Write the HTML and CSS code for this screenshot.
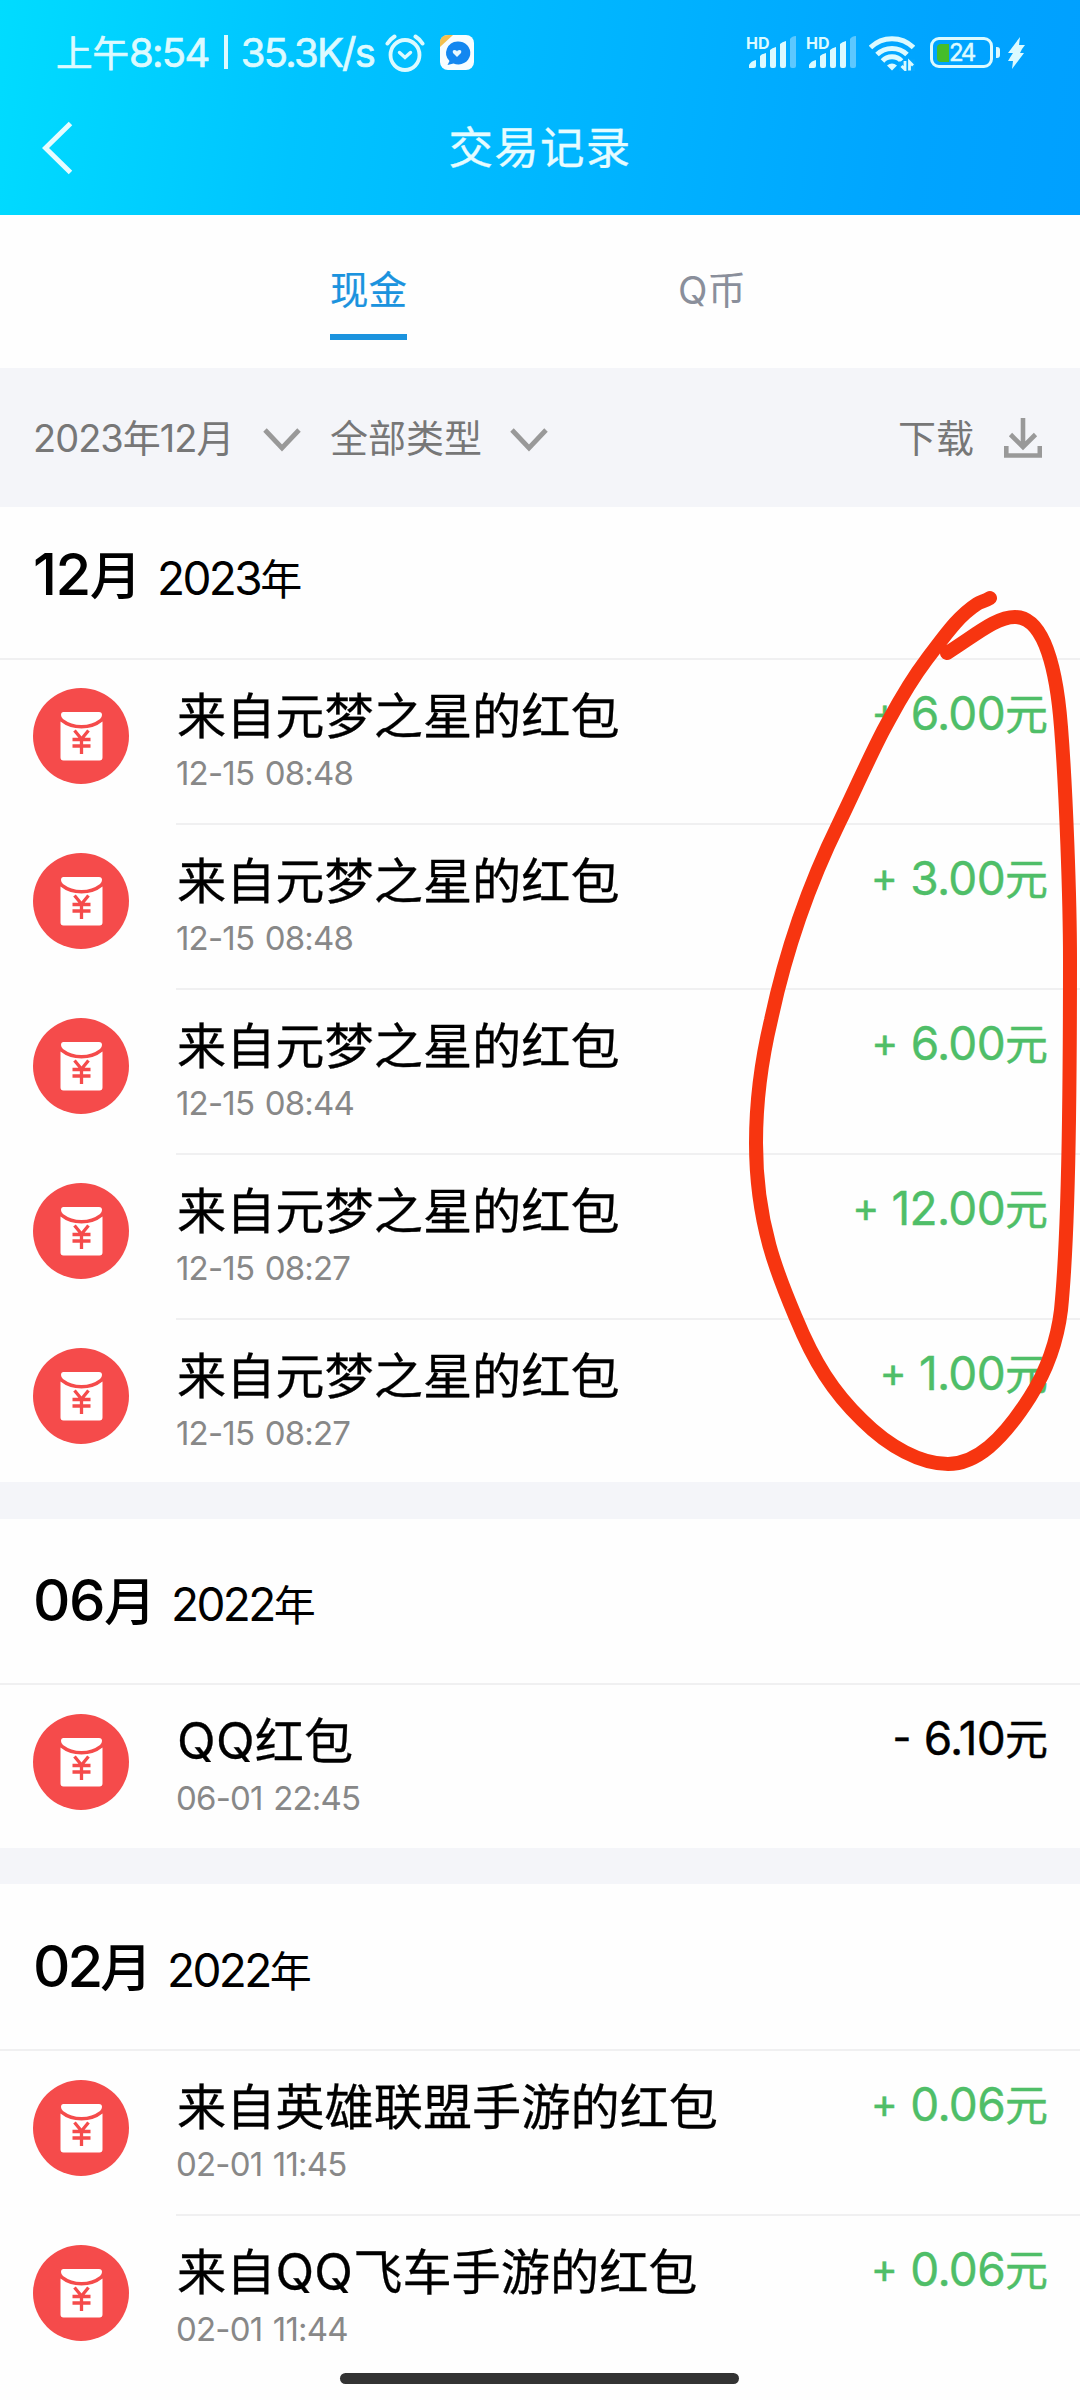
FILE: index.html
```html
<!DOCTYPE html>
<html lang="zh-CN">
<head>
<meta charset="utf-8">
<title>交易记录</title>
<link rel="stylesheet" href="styles.css">
</head>
<body>
<svg class="defs" width="0" height="0">
  <symbol id="packet" viewBox="0 0 96 96">
    <circle cx="48" cy="48" r="48" fill="#f54b4b"/>
    <path d="M30.500 24h35.500q3 0 3 3q0 2-2 4q-8 6-18.500 6t-18.500-6q-2-2-2-4q0-3 2.500-3z" fill="#fff"/>
    <path d="M27.500 33.500q8.500 7 21 7t21-7v36q0 3-3 3h-36q-3 0-3-3z" fill="#fff"/>
    <path d="M41.500 42.500l7 8.500 7-8.500M48.500 51v15M39.500 51.500h18M39.500 58h18" fill="none" stroke="#f54b4b" stroke-width="3.300"/>
  </symbol>
  <symbol id="signal" viewBox="0 0 50 34">
    <path d="M1 33v-3q2-4 7-5v6q0 2-2 2zM12 33v-12q2-2 6-3v13q0 2-2 2h-2q-2 0-2-2zM22 31v-16q2-2 6-3v19q0 2-2 2h-2q-2 0-2-2zM32 31v-22q2-2 6-3v25q0 2-2 2h-2q-2 0-2-2z" fill="#dcfaff"/>
    <path d="M42 31v-27q2-3 6-3v30q0 2-2 2h-2q-2 0-2-2z" fill="#5cc8ff"/>
  </symbol>
  <symbol id="chevron" viewBox="0 0 38 24">
    <path d="M2 2l17 18L36 2" fill="none" stroke="#999" stroke-width="4.800"/>
  </symbol>
</svg>

<div class="screen">
  <header class="top">
    <div class="status">
      <div class="clock"><span class="cjk">上午</span>8:54<i class="bar"></i>35.3K/s</div>
      <svg class="alarm" width="40" height="38" viewBox="0 0 40 38" fill="none" stroke="#dcfaff" stroke-linecap="round">
        <ellipse cx="20" cy="21" rx="14.500" ry="15" stroke-width="3.800"/>
        <path d="M2.500 9.500q3-4.500 7-7M37.500 9.500q-3-4.500-7-7" stroke-width="4"/>
        <path d="M14.500 18.500l5.500 5 5.500-5" stroke-width="3.400"/>
      </svg>
      <svg class="app" width="34" height="35" viewBox="0 0 34 35">
        <rect width="34" height="35" rx="8" fill="#f8fdff"/>
        <path d="M0 12V8q0-8 8-8h5z" fill="#f3bf4d"/>
        <circle cx="17.500" cy="17.500" r="14" fill="#f8fdff"/>
        <path d="M17.500 6.500a12 11.500 0 1 1-4 22l-6 1.500 2-4a12 11.500 0 0 1 8-19.500z" fill="#1387f0"/>
        <path d="M17 22l-4-4q-1-3 1.500-3t2.500 1.500q0-1.500 2.500-1.500t1.500 3z" fill="#e9f8ff"/>
      </svg>
      <div class="net"><span class="hd">HD</span><svg width="50" height="34"><use href="#signal"/></svg></div>
      <div class="net"><span class="hd">HD</span><svg width="50" height="34"><use href="#signal"/></svg></div>
      <svg class="wifi" width="46" height="36" viewBox="0 0 46 36">
        <g fill="none" stroke="#dcfaff" stroke-width="5">
          <path d="M1.500 12.500a30.500 30.500 0 0 1 43 0"/>
          <path d="M8 19.500a21.500 21.500 0 0 1 30 0"/>
          <path d="M13.500 26a13 13 0 0 1 19 0"/>
        </g>
        <path d="M18 30.500q5-4 10 0l-5 5z" fill="#dcfaff"/>
        <path d="M30 26.500h5l5-2h6v12H30z" fill="#06a8ff"/>
        <path d="M36 26v8.500l-3.500-3.500M40.500 35.500v-8.500l3.500 3.500" fill="none" stroke="#dcfaff" stroke-width="2.800"/>
      </svg>
      <div class="battery"><i class="charge"></i><span>24</span></div>
      <i class="tip"></i>
      <svg class="bolt" width="18" height="32" viewBox="0 0 18 32"><path d="M13 0L1 16h5l-2 3-3 5h5L5 32 17 16h-4l2-4 3-4h-6z" fill="#dcfaff"/></svg>
    </div>
    <div class="nav">
      <svg class="back" width="32" height="54" viewBox="0 0 32 54"><path d="M28.500 2.500L3.500 27l25 24.500" fill="none" stroke="#e6fcff" stroke-width="5"/></svg>
      <h1>交易记录</h1>
    </div>
  </header>

  <nav class="tabs">
    <div class="tab active">现金</div>
    <div class="tab"><span>Q币</span></div>
  </nav>

  <div class="filters">
    <span class="month-filter">2023年12月</span>
    <svg class="chev one" width="38" height="24"><use href="#chevron"/></svg>
    <span>全部类型</span>
    <svg class="chev two" width="38" height="24"><use href="#chevron"/></svg>
    <span class="download">下载</span>
    <svg width="38" height="40" viewBox="0 0 38 40" fill="none" stroke="#999" stroke-width="4.600"><path d="M19 0v29M6.500 16.500L19 29l12.500-12.500M2.300 28v9.500h33.500v-9.500"/></svg>
  </div>

  <section class="group first">
    <h2><b>12<span class="cjk">月</span></b><span class="year">2023<span class="cjk">年</span></span></h2>
    <article class="row"><svg class="icon"><use href="#packet"/></svg><div class="body"><div class="info"><p class="name">来自元梦之星的红包</p><p class="date">12-15 08:48</p></div><p class="amount"><span class="sign">+ </span>6.00<span>元</span></p></div></article>
    <article class="row"><svg class="icon"><use href="#packet"/></svg><div class="body"><div class="info"><p class="name">来自元梦之星的红包</p><p class="date">12-15 08:48</p></div><p class="amount"><span class="sign">+ </span>3.00<span>元</span></p></div></article>
    <article class="row"><svg class="icon"><use href="#packet"/></svg><div class="body"><div class="info"><p class="name">来自元梦之星的红包</p><p class="date">12-15 08:44</p></div><p class="amount"><span class="sign">+ </span>6.00<span>元</span></p></div></article>
    <article class="row"><svg class="icon"><use href="#packet"/></svg><div class="body"><div class="info"><p class="name">来自元梦之星的红包</p><p class="date">12-15 08:27</p></div><p class="amount"><span class="sign">+ </span>12.00<span>元</span></p></div></article>
    <article class="row"><svg class="icon"><use href="#packet"/></svg><div class="body"><div class="info"><p class="name">来自元梦之星的红包</p><p class="date">12-15 08:27</p></div><p class="amount"><span class="sign">+ </span>1.00<span>元</span></p></div></article>
  </section>

  <section class="group">
    <h2><b>06<span class="cjk">月</span></b><span class="year">2022<span class="cjk">年</span></span></h2>
    <article class="row"><svg class="icon"><use href="#packet"/></svg><div class="body"><div class="info"><p class="name"><span class="latin">QQ</span>红包</p><p class="date">06-01 22:45</p></div><p class="amount out"><span class="sign">- </span>6.10<span>元</span></p></div></article>
  </section>

  <section class="group last">
    <h2><b>02<span class="cjk">月</span></b><span class="year">2022<span class="cjk">年</span></span></h2>
    <article class="row"><svg class="icon"><use href="#packet"/></svg><div class="body"><div class="info"><p class="name">来自英雄联盟手游的红包</p><p class="date">02-01 11:45</p></div><p class="amount"><span class="sign">+ </span>0.06<span>元</span></p></div></article>
    <article class="row"><svg class="icon"><use href="#packet"/></svg><div class="body"><div class="info"><p class="name">来自<span class="latin">QQ</span>飞车手游的红包</p><p class="date">02-01 11:44</p></div><p class="amount"><span class="sign">+ </span>0.06<span>元</span></p></div></article>
  </section>

  <i class="home"></i>

  <!-- hand-drawn marker loop around the December amounts -->
  <svg class="marker" width="1080" height="2400" viewBox="0 0 1080 2400">
    <path d="M990 598C985 601 980 602 977 604C957 617 944 637 927 659C905 688 893 713 883 731C868 760 855 790 839 823C812 878 788 940 771 1020C761 1062 756 1105 756 1143C756 1225 779 1278 796 1318C814 1362 833 1392 862 1420C889 1447 921 1464 948 1464C976 1464 1002 1441 1030 1397C1047 1370 1057 1343 1061 1310C1065 1270 1068 1190 1069 1120C1070 1050 1070 1000 1070 960C1070 900 1066 790 1061 727C1057 675 1046 617 1015 617C996 617 977 634 947 653"/>
  </svg>
</div>
</body>
</html>
```
FILE: styles.css
```css
* { box-sizing: border-box; margin: 0; padding: 0; }
body {
  width: 1080px;
  background: #fff;
  font-family: Inter, "Noto Sans CJK SC", sans-serif;
}
svg { display: block; flex: none; }
i { display: block; flex: none; }
.defs { position: absolute; }
.screen {
  position: relative;
  width: 1080px;
  height: 2400px;
  overflow: hidden;
  background: #fefefe;
}

/* header */
.top {
  height: 215px;
  background: linear-gradient(98deg, #00dcff 0%, #00c4ff 28%, #00b2ff 60%, #00a4ff 85%, #00a0ff 100%);
  color: #dcfaff;
}
.status {
  display: flex;
  height: 82px;
  padding: 34px 55px 0 56px;
}
.clock {
  display: flex;
  align-items: baseline;
  width: 329px;
  height: 36px;
  line-height: 38px;
  font-size: 40px;
  letter-spacing: -1.7px;
  white-space: nowrap;
  -webkit-text-stroke: .7px #dcfaff;
}
.clock .cjk { font-size: 36.5px; letter-spacing: 0; }
.clock .bar {
  align-self: flex-start;
  width: 4px;
  height: 34px;
  margin: 1px 13px 0 15px;
  background: #dcfaff;
}
.app { margin: 1px 272px 0 15px; }
.net { position: relative; width: 50px; height: 35px; margin-right: 10px; }
.net svg { margin: 1px 0 0 2px; }
.net .hd {
  position: absolute;
  left: 0;
  top: 2px;
  font-size: 16px;
  font-weight: 700;
  line-height: 15px;
}
.wifi { margin: 1px 15px 0 3px; }
.battery {
  display: flex;
  align-items: center;
  width: 63px;
  height: 31px;
  margin-top: 3px;
  padding-left: 4px;
  border: 3px solid #dcfaff;
  border-radius: 9px;
}
.charge { width: 12px; height: 18px; border-radius: 4px 0 0 4px; background: #45bd2b; }
.battery span { font-size: 24px; line-height: 24px; letter-spacing: -2.4px; -webkit-text-stroke: .5px #dcfaff; }
.tip { width: 4px; height: 11px; margin: 13px 7px 0 3px; border-radius: 0 3px 3px 0; background: #dcfaff; }
.bolt { margin-top: 3px; }
.nav {
  display: grid;
  grid-template-columns: 90px 1fr 90px;
  align-items: center;
  height: 132px;
}
.back { margin-left: 42px; }
.nav h1 {
  font-size: 44.5px;
  font-weight: 400;
  letter-spacing: 1.3px;
  line-height: 60px;
  text-align: center;
  color: #e6fcff;
  -webkit-text-stroke: .3px #e6fcff;
}

/* tabs */
.tabs {
  display: flex;
  gap: 271px;
  height: 153px;
  padding: 44px 0 0 330px;
}
.tab {
  height: 81px;
  font-size: 38.5px;
  line-height: 62px;
  color: #8a8f9b;
}
.tab.active { color: #1b93de; border-bottom: 6px solid #1b93de; -webkit-text-stroke: .2px #1b93de; }

/* filters */
.filters {
  display: flex;
  align-items: center;
  height: 139px;
  padding: 0 38px 0 33px;
  background: #f4f5f9;
  font-size: 38px;
  color: #777;
}
.filters span { line-height: 60px; }
.month-filter { width: 230px; letter-spacing: -1px; white-space: nowrap; }
.chev { margin-top: 4px; }
.chev.one { margin-right: 29px; }
.chev.two { margin-left: 28px; margin-right: auto; }
.download { margin-right: 30px; }

/* groups */
.group { border-bottom: 36px solid #f4f5f9; }
.group h2 {
  display: flex;
  align-items: baseline;
  height: 166px;
  padding: 61px 33px 0;
  border-bottom: 2px solid #f0f0f1;
  font-weight: 400;
  color: #000;
  white-space: nowrap;
}
.group h2 b { display: block; width: 138px; font-size: 58px; line-height: 40px; font-weight: 500; letter-spacing: -1.5px; }
.group h2 b .cjk { font-size: 52px; letter-spacing: 0; }
.year { font-size: 46px; line-height: 40px; letter-spacing: -2.6px; }
.year .cjk { font-size: 42px; letter-spacing: 0; }
.group.first { border-bottom-width: 37px; }
.group.first h2 { height: 153px; padding-top: 47px; }
.group.first h2 b { width: 124px; }
.group.last { border-bottom: 0; }
.group.last h2 { height: 167px; padding-top: 62px; }
.group.last h2 b { width: 134px; letter-spacing: -3px; }

.row { display: flex; height: 165px; padding-left: 33px; }
.icon { width: 96px; height: 96px; margin: 29px 47px 0 0; }
.group.first .icon { margin-top: 28px; }
.body {
  display: flex;
  flex: 1;
  justify-content: space-between;
  padding-right: 32px;
  border-bottom: 2px solid #f0f0f1;
}
.row:last-child { height: 163px; }
.row:last-child .body { border-bottom: 0; }
.group.first .row:last-child { height: 162px; }
.info { padding-top: 26px; white-space: nowrap; }
.name { padding-left: 1px; font-size: 49.2px; line-height: 60px; color: #000; -webkit-text-stroke: .3px #000; }
.name .latin { font-size: 50.5px; letter-spacing: .3px; }
.date { margin-top: 7px; font-size: 33px; line-height: 40px; letter-spacing: -.8px; word-spacing: 2px; color: #888; }
.amount { padding-top: 23px; font-size: 46px; line-height: 60px; letter-spacing: -.7px; color: #4fbe68; white-space: pre; -webkit-text-stroke: .4px currentColor; }
.amount span { font-size: 43px; letter-spacing: 0; }
.amount .sign { font-size: 41px; letter-spacing: .4px; vertical-align: 3px; line-height: 40px; }
.amount.out { color: #000; }

.home {
  position: absolute;
  left: 340px;
  top: 2373px;
  width: 399px;
  height: 11px;
  border-radius: 6px;
  background: #333;
}
.marker { position: absolute; left: 0; top: 0; pointer-events: none; }
.marker path {
  fill: none;
  stroke: #f73510;
  stroke-width: 14;
  stroke-linecap: round;
  stroke-linejoin: round;
}
```
